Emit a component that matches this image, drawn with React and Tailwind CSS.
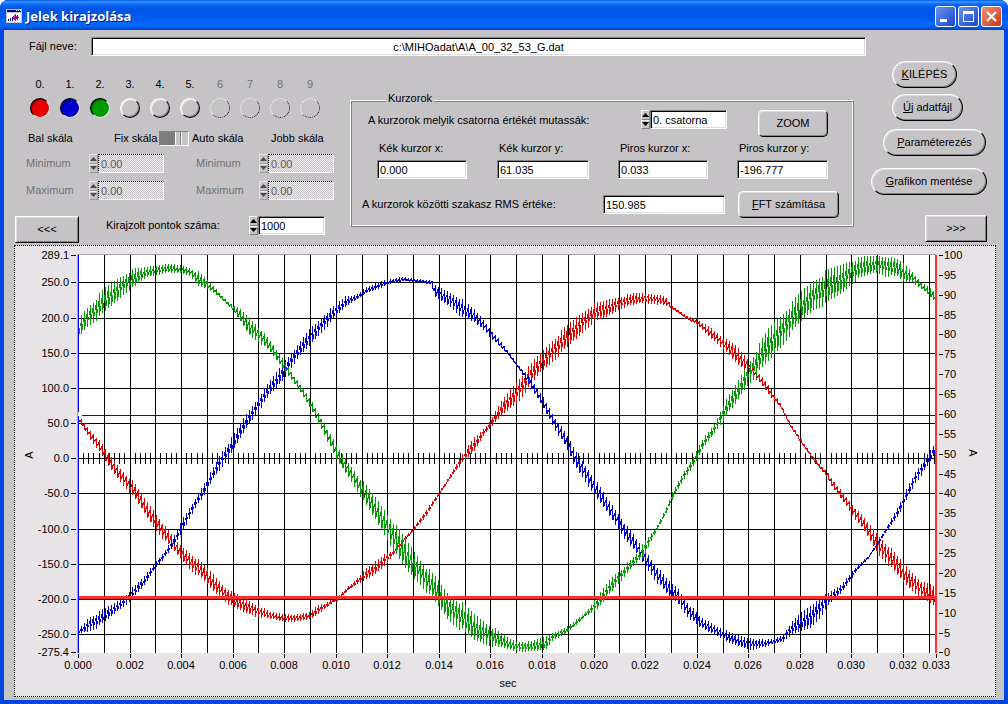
import { useState } from "react";
import clsx from "clsx";

// envelope of every channel: [x, top, bottom]
const GREEN = [
  [79,318,337],[86,308,328],[94,300,322],[105,288,312],[115,280,303],[125,273,293],[135,269,287],
  [145,267,278],[155,265,275],[167,264,273],[180,265,273],[190,268,276],[198,272,287],[208,281,290],
  [215,288,294],[225,299,302],[233,306,311],[240,309,322],[250,318,337],[260,328,343],[272,344,355],
  [285,362,372],[300,385,392],[312,402,412],[325,425,437],[337,447,462],[350,465,480],[365,485,505],
  [375,497,520],[387,513,540],[400,532,563],[410,545,575],[422,562,587],[435,577,603],[448,593,620],
  [460,602,630],[473,613,640],[487,623,645],[500,633,648],[515,641,651],[530,642,652],[545,636,650],
  [553,632,640],[565,628,634],[575,620,626],[585,612,616],[597,597,610],[610,578,593],[623,567,578],
  [637,553,562],[643,542,557],[655,528,533],[665,510,515],[672,492,500],[683,472,480],[693,457,467],
  [703,438,448],[715,422,432],[723,405,420],[735,385,405],[745,367,388],[755,352,377],[768,328,362],
  [780,315,348],[790,305,335],[800,292,323],[813,280,310],[825,272,305],[840,264,295],[852,260,283],
  [863,257,277],[875,255,273],[885,256,276],[897,259,277],[903,263,282],[912,272,282],[922,283,290],
  [930,288,298],[935,293,302],
];

const BLUE = [
  [79,629,633],[88,617,632],[97,613,628],[107,607,620],[115,602,613],[123,597,607],[133,587,598],
  [143,577,587],[155,562,568],[165,550,557],[173,537,547],[183,517,530],[195,498,508],[203,485,498],
  [213,467,478],[222,450,467],[232,437,453],[245,415,430],[257,398,413],[270,380,395],[283,362,380],
  [295,348,362],[310,328,345],[325,313,328],[338,302,315],[345,296,307],[355,295,300],[367,287,293],
  [380,281,288],[390,279,284],[403,277,281],[415,279,281],[431,280,285],[434,285,297],[450,292,307],
  [462,300,318],[475,310,323],[485,322,332],[495,335,343],[507,350,354],[520,367,371],[530,378,388],
  [543,397,408],[553,415,427],[565,433,447],[575,450,467],[590,472,489],[597,483,500],[607,498,513],
  [617,512,528],[627,527,543],[637,540,555],[647,553,570],[657,567,583],[667,580,595],[677,587,603],
  [687,602,617],[700,617,628],[715,625,635],[728,632,643],[740,636,647],[752,638,650],[765,640,647],
  [775,638,643],[783,635,642],[787,627,637],[800,613,632],[810,605,628],[820,597,617],[830,592,603],
  [842,583,592],[855,567,573],[867,557,559],[877,542,545],[887,525,530],[897,508,518],[907,487,498],
  [915,471,483],[923,460,473],[930,450,462],[935,443,453],
];

const RED = [
  [79,417,422],[90,430,440],[100,442,453],[108,453,467],[120,468,482],[133,482,497],[143,497,512],
  [155,512,530],[165,527,542],[177,542,555],[190,553,570],[200,562,578],[212,573,590],[223,585,600],
  [233,593,608],[245,598,613],[257,605,617],[270,612,619],[285,614,622],[300,614,621],[310,612,619],
  [317,605,615],[325,603,608],[337,597,600],[347,587,591],[355,580,585],[362,572,582],[373,563,576],
  [385,553,565],[393,550,555],[403,538,542],[413,527,531],[427,508,515],[440,490,493],[450,474,478],
  [460,457,465],[473,438,453],[485,427,433],[495,412,423],[505,395,413],[517,380,403],[527,368,390],
  [540,353,373],[552,340,362],[565,327,350],[578,315,337],[592,305,323],[605,300,318],[618,297,310],
  [630,294,306],[642,293,303],[655,294,304],[665,297,306],[672,306,309],[685,315,318],[697,320,325],
  [710,327,338],[722,337,348],[735,345,363],[747,358,372],[757,372,380],[770,387,397],[780,403,407],
  [790,423,427],[800,438,442],[813,457,460],[827,472,478],[830,477,485],[843,493,502],[857,510,522],
  [868,523,538],[878,535,555],[890,548,567],[903,563,583],[913,573,592],[923,582,600],[935,587,607],
];

// one vertical bar per pixel column: a tall spike every third column, short bars between
function trace(points) {
  let d = "";
  let i = 0;
  for (let x = points[0][0]; x <= 935; x++) {
    while (i < points.length - 2 && points[i + 1][0] <= x) i++;
    const [x0, t0, b0] = points[i];
    const [x1, t1, b1] = points[i + 1];
    const k = (x - x0) / (x1 - x0);
    const mid = (t0 + b0) / 2 + ((t1 + b1 - t0 - b0) / 2) * k;
    const half = ((b0 - t0) + (b1 - t1 - b0 + t0) * k) / 2;
    const noise = ((x * 37) % 11) / 11;
    const step = x % 3;
    let up = 1.1 - noise * 0.3;
    let down = 0.85 + noise * 0.25;
    if (step === 1) {
      up = -0.05;
      down = 0.35 + noise * 0.4;
    }
    if (step === 2) {
      up = 0.3 + noise * 0.3;
      down = 0;
    }
    const top = Math.round(mid - half * up);
    const bottom = Math.max(top + 2, Math.round(mid + half * down));
    d += `M${x} ${top}V${bottom}`;
  }
  return d;
}

const range = (n) => Array.from({ length: n }, (_, i) => i);

const gridX = range(33).map((i) => Math.round(78 + (i + 1) * 25.78));
const leftAxis = [
  ["289.1", 255], ["250.0", 282], ["200.0", 318], ["150.0", 353], ["100.0", 388], ["50.0", 423],
  ["0.0", 458], ["-50.0", 493], ["-100.0", 529], ["-150.0", 564], ["-200.0", 599], ["-250.0", 634],
  ["-275.4", 652],
];
const rightAxis = range(21).map((i) => [100 - i * 5, Math.round(255 + i * 19.87)]);
const bottomAxis = range(17).map((i) => [(i * 0.002).toFixed(3), Math.round(78 + i * 51.56)]);

function Chart() {
  return (
    <svg viewBox="15 246 980 450" className="block h-auto w-full" fontSize="11" role="img" aria-label="Jelek">
      <rect x="78" y="255" width="858" height="398" fill="#fff" />
      <path d="M77 254.5H936M77.5 254V653" stroke="#a5a2a5" />

      <g stroke="#000" strokeWidth="1" shapeRendering="crispEdges">
        {gridX.map((x) => <path key={x} d={`M${x + 0.5} 255V653`} />)}
        {leftAxis.slice(1, -1).map(([t, y]) => <path key={t} d={`M78 ${y + 0.5}H936`} />)}
        {range(166).map((i) => {
          const x = Math.round(78 + (i + 1) * 5.156) + 0.5;
          return <path key={i} d={`M${x} 453V464`} />;
        })}
        {leftAxis.map(([t, y]) => <path key={t} d={`M71 ${y + 0.5}H76`} />)}
        {rightAxis.map(([t, y]) => <path key={t} d={`M939 ${y + 0.5}H943`} />)}
        {bottomAxis.map(([t, x]) => <path key={t} d={`M${x + 0.5} 654V658`} />)}
        <path d="M936.5 654V658" />
      </g>

      <g fill="none" strokeWidth="1" shapeRendering="crispEdges" transform="translate(.5 0)">
        <path d={trace(RED)} stroke="#e00000" />
        <path d={trace(BLUE)} stroke="#0000ce" />
        <path d={trace(GREEN)} stroke="#009a00" />
      </g>

      {/* cursors */}
      <g shapeRendering="crispEdges">
        <rect x="78" y="255" width="1" height="398" fill="#0000ff" />
        <rect x="78" y="412" width="1" height="4" fill="#fff" />
        <rect x="82" y="415" width="854" height="1" fill="#0000ff" />
        <rect x="79" y="596" width="857" height="3" fill="#ff3030" />
        <rect x="935" y="255" width="2" height="398" fill="#ff3030" />
      </g>

      {leftAxis.map(([t, y]) => <text key={t} x="69" y={y + 4} textAnchor="end">{t}</text>)}
      {rightAxis.map(([t, y]) => <text key={t} x="944" y={y + 4}>{t}</text>)}
      {bottomAxis.map(([t, x]) => <text key={t} x={x} y="669" textAnchor="middle">{t}</text>)}
      <text x="936" y="669" textAnchor="middle">0.033</text>
      <text x="508" y="687" textAnchor="middle">sec</text>
      <text transform="translate(33 455) rotate(-90)" textAnchor="middle">A</text>
      <text transform="translate(969 453) rotate(90)" textAnchor="middle">A</text>
    </svg>
  );
}

function Field({ className, disabled, ...props }) {
  return (
    <input
      disabled={disabled}
      className={clsx(
        "h-[19px] min-w-0 border px-[2px] leading-4 outline-none",
        disabled
          ? "border-dotted border-t-black border-l-black border-r-white border-b-white bg-[repeating-conic-gradient(#c6c3c6_0_25%,#efebef_0_50%)] bg-[length:2px_2px] text-[#5a5a5a]"
          : "border-t-[#848284] border-l-[#848284] border-r-white border-b-white bg-white text-black shadow-[inset_1px_1px_0_#000,inset_-1px_-1px_0_#dedbde]",
        className
      )}
      {...props}
    />
  );
}

function Spinner({ className, disabled, ...props }) {
  const arrow =
    "flex flex-1 items-center justify-center border border-t-white border-l-white border-r-[#848284] border-b-[#848284] bg-[#c6c3c6]";
  return (
    <div className={clsx("flex h-[19px]", className)}>
      <div className={clsx("flex w-[9px] shrink-0 flex-col", disabled && "opacity-60")}>
        <button type="button" disabled={disabled} aria-label="Növel" className={arrow}>
          <svg viewBox="0 0 7 4" className="h-1 w-[7px] shrink-0"><path d="M3.5 0L7 4H0z" /></svg>
        </button>
        <button type="button" disabled={disabled} aria-label="Csökkent" className={arrow}>
          <svg viewBox="0 0 7 4" className="h-1 w-[7px] shrink-0"><path d="M0 0H7L3.5 4z" /></svg>
        </button>
      </div>
      <Field disabled={disabled} className="flex-1" {...props} />
    </div>
  );
}

function Button({ className, children }) {
  return (
    <button
      type="button"
      className={clsx(
        "h-[27px] shrink-0 border border-t-white border-l-white border-r-black border-b-black bg-[#c6c3c6] whitespace-nowrap shadow-[inset_1px_1px_0_#dedbde,inset_-1px_-1px_0_#848284]",
        className
      )}
    >
      {children}
    </button>
  );
}

function ScaleRow({ name }) {
  return (
    <div className="mt-2 flex h-[19px] items-center pl-[22px]">
      <label htmlFor={name + "-bal"} className="w-[63px] text-[#737173]">{name}</label>
      <Spinner id={name + "-bal"} disabled defaultValue="0.00" className="w-[75px]" />
      <label htmlFor={name + "-jobb"} className="ml-8 w-[63px] text-[#737173]">{name}</label>
      <Spinner id={name + "-jobb"} disabled defaultValue="0.00" className="w-[75px]" />
    </div>
  );
}

const channelColors = ["checked:bg-[#e60000]", "checked:bg-[#0000ce]", "checked:bg-[#009a00]"];

function Channels() {
  const [on, setOn] = useState([true, true, true, false, false, false, false, false, false, false]);

  return (
    <div className="flex pl-[21px]">
      {on.map((checked, i) => {
        const disabled = i > 5;
        return (
          <label key={i} className={clsx("flex w-[30px] flex-col items-center gap-[6px] leading-4", disabled && "text-[#737173]")}>
            {disabled ? i : i + "."}
            <input
              type="checkbox"
              checked={checked}
              disabled={disabled}
              onChange={() => setOn(on.map((v, n) => (n === i ? !v : v)))}
              className={clsx(
                "size-5 appearance-none rounded-full border border-t-white border-l-white border-r-black border-b-black",
                "checked:border-t-black checked:border-l-black checked:border-r-[#efebef] checked:border-b-[#efebef]",
                disabled
                  ? "border-dotted border-r-[#424142] border-b-[#424142]"
                  : "shadow-[inset_1px_1px_0_#efebef,inset_-1px_-1px_0_#848284] checked:shadow-[inset_1px_1px_0_#00000080]",
                channelColors[i] || "checked:bg-[#e0e000]"
              )}
            />
          </label>
        );
      })}
    </div>
  );
}

function CursorField({ label, value, className }) {
  return (
    <label className="flex flex-col gap-1 leading-4">
      <span className="pl-[2px]">{label}</span>
      <Field defaultValue={value} className={className} />
    </label>
  );
}

function TitleBar() {
  const box = "flex size-[21px] items-center justify-center rounded-[3px] border border-white";
  return (
    <header className="flex h-[30px] items-center bg-[linear-gradient(to_bottom,#0058e6_0%,#3a93ff_6%,#0a6cf8_14%,#0055e5_28%,#0058ee_55%,#026afe_80%,#0062f0_90%,#0040c0_100%)] pt-[2px] pr-[6px] pl-[6px]">
      <svg viewBox="0 0 16 14" className="h-[14px] w-4" shapeRendering="crispEdges">
        <rect width="16" height="14" fill="#c6c3c6" />
        <rect x="1" y="1" width="14" height="2" fill="#000084" />
        <path d="M10 1.5h1M12 1.5h1M14 1.5h1" stroke="#fff" />
        <rect x="1" y="4" width="14" height="9" fill="#fff" />
        <path d="M2.5 10v2M4.5 9v3M6.5 8v4" stroke="#000084" />
        <path d="M7 7h1V6h1V5h1v2h2v1h1v1h-1v1h-2v2H9v-1H8v-1H7z" fill="#c000c0" />
        <path d="M9 8.5h4M11.5 6v1M11.5 10v1" stroke="#000" />
      </svg>
      <h1 className="ml-1 flex-1 font-['Open_Sans','Noto_Sans',sans-serif] text-[13px] leading-4 font-bold text-white [text-shadow:1px_1px_0_#0a1883]">
        Jelek kirajzolása
      </h1>
      <div className="flex gap-[2px]">
        <button type="button" aria-label="Kis méret" className={clsx(box, "bg-linear-to-br from-[#6b92f0] to-[#1c45c8]")}>
          <svg viewBox="0 0 19 19" className="size-[19px]"><path d="M4 12h7v3H4z" fill="#fff" /></svg>
        </button>
        <button type="button" aria-label="Teljes méret" className={clsx(box, "bg-linear-to-br from-[#6b92f0] to-[#1c45c8]")}>
          <svg viewBox="0 0 19 19" className="size-[19px]"><path d="M4 4h11v11H4zM5 7v7h9V7z" fill="#fff" fillRule="evenodd" /></svg>
        </button>
        <button type="button" aria-label="Bezárás" className={clsx(box, "bg-linear-to-br from-[#f09070] to-[#c83010]")}>
          <svg viewBox="0 0 19 19" className="size-[19px]"><path d="M5 5l9 9M14 5l-9 9" stroke="#fff" strokeWidth="2.2" /></svg>
        </button>
      </div>
    </header>
  );
}

function App() {
  return (
    <div className="flex min-h-screen flex-col overflow-hidden rounded-t-lg bg-[#0046dc] font-['Liberation_Sans',Arial,sans-serif] text-[11px] text-black">
      <TitleBar />

      <main className="mx-1 mb-1 flex-1 bg-[#c6c3c6] pt-[7px] pb-[2px]">
        <div className="flex">
          <div className="min-w-0 flex-1">
            <div className="flex items-center pr-[5px] pl-[25px]">
              <label htmlFor="file" className="w-[62px]">Fájl neve:</label>
              <Field id="file" readOnly value="c:\MIHOadat\A\A_00_32_53_G.dat" className="flex-1 text-center" />
            </div>

            <div className="mt-5 flex items-start">
              <div className="w-[346px] shrink-0">
                <Channels />
                <div className="mt-3 flex h-4 items-center pl-6">
                  <span className="w-[86px]">Bal skála</span>
                  <span className="w-[45px]">Fix skála</span>
                  <input
                    id="auto"
                    type="checkbox"
                    defaultChecked
                    className="h-[15px] w-[30px] appearance-none border border-t-[#848284] border-l-[#848284] border-r-white border-b-white bg-[linear-gradient(to_right,#7b7d7b_15px,#fff_15px,#fff_16px,#c6c3c6_16px,#c6c3c6_20px,#848284_20px,#848284_21px,#fff_21px,#fff_22px,#c6c3c6_22px)]"
                  />
                  <label htmlFor="auto" className="ml-[3px] w-[79px]">Auto skála</label>
                  <span>Jobb skála</span>
                </div>
                <ScaleRow name="Minimum" />
                <ScaleRow name="Maximum" />
                <div className="mt-4 flex items-start pl-[11px]">
                  <Button className="w-16">&lt;&lt;&lt;</Button>
                  <label htmlFor="points" className="ml-[27px] w-[143px] leading-[19px]">Kirajzolt pontok száma:</label>
                  <Spinner id="points" defaultValue="1000" className="w-[76px]" />
                </div>
              </div>

              <fieldset className="mt-4 mr-[17px] min-w-0 flex-1 border border-t-white border-l-white border-r-[#848284] border-b-[#848284] pb-2 shadow-[inset_1px_1px_0_#848284,inset_-1px_-1px_0_#fff]">
                <legend className="ml-[35px] h-4 bg-[#c6c3c6] px-[2px] leading-3">Kurzorok</legend>
                <div className="flex items-start pt-[2px] pl-[17px]">
                  <label htmlFor="channel" className="w-[273px] leading-5">A kurzorok melyik csatorna értékét mutassák:</label>
                  <Spinner id="channel" defaultValue="0. csatorna" className="w-[86px]" />
                  <Button className="ml-[31px] w-[70px] rounded-[5px]">ZOOM</Button>
                </div>
                <div className="mt-[3px] grid grid-cols-[120px_121px_119px_91px] pl-[26px]">
                  <CursorField label="Kék kurzor x:" value="0.000" className="w-[90px]" />
                  <CursorField label="Kék kurzor y:" value="61.035" className="w-[92px]" />
                  <CursorField label="Piros kurzor x:" value="0.033" className="w-[90px]" />
                  <CursorField label="Piros kurzor y:" value="-196.777" className="w-[91px]" />
                </div>
                <div className="mt-3 flex items-center pl-[11px]">
                  <label htmlFor="rms" className="w-[241px]">A kurzorok közötti szakasz RMS értéke:</label>
                  <Field id="rms" defaultValue="150.985" className="w-[122px]" />
                  <Button className="ml-[13px] w-[101px] rounded-[5px]"><u>F</u>FT számítása</Button>
                </div>
              </fieldset>
            </div>
          </div>

          <div className="flex w-[133px] shrink-0 flex-col items-start pt-6">
            <Button className="ml-[21px] w-[65px] rounded-full"><u>K</u>ILÉPÉS</Button>
            <Button className="mt-[6px] ml-[21px] w-[71px] rounded-full"><u>Ú</u>j adatfájl</Button>
            <Button className="mt-2 ml-3 w-[103px] rounded-full"><u>P</u>araméterezés</Button>
            <Button className="mt-3 w-[116px] rounded-full"><u>G</u>rafikon mentése</Button>
            <Button className="mt-5 ml-[54px] w-[62px]">&gt;&gt;&gt;</Button>
          </div>
        </div>

        <section className="mt-[2px] mr-2 ml-[10px] border border-dotted border-black bg-[#e7e3e7]">
          <Chart />
        </section>
      </main>
    </div>
  );
}

export default App;
